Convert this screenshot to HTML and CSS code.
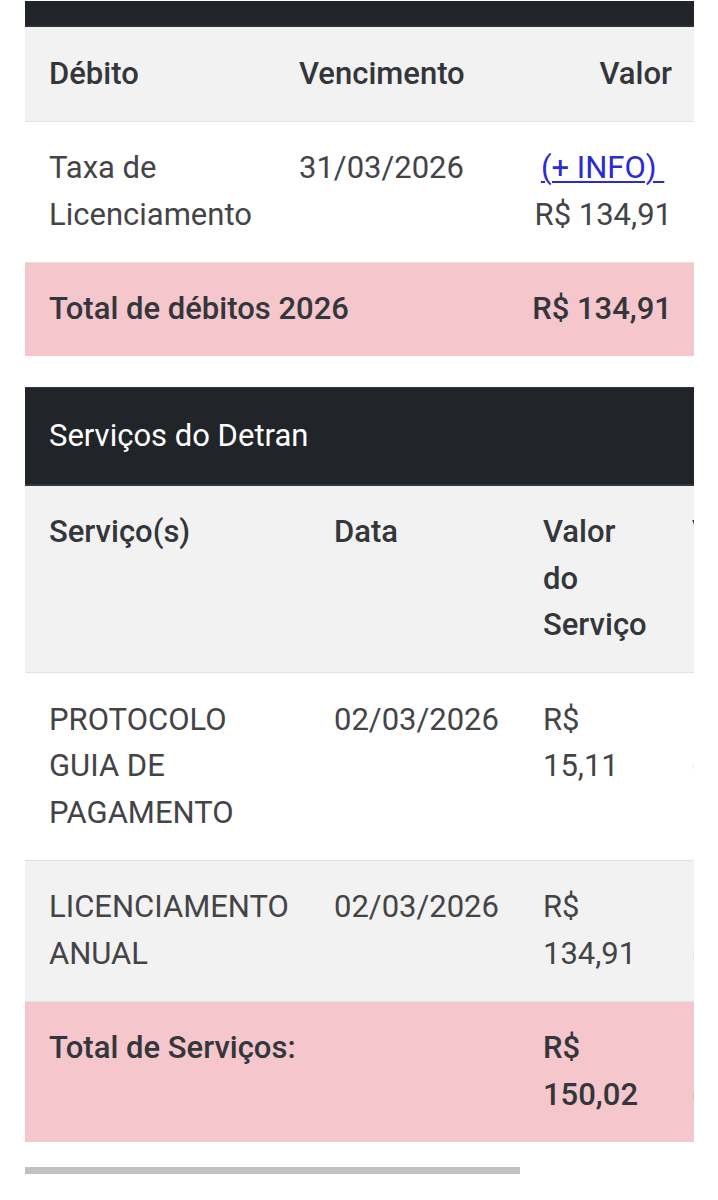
FILE: index.html
```html
<!DOCTYPE html>
<html lang="pt-BR">
<head>
<meta charset="utf-8">
<title>Débitos do veículo</title>
<link rel="stylesheet" href="styles.css">
</head>
<body>
<div class="page">
  <div class="scroller">
    <table class="tbl tbl-debitos">
      <colgroup><col class="d1"><col class="d2"><col class="d3"></colgroup>
      <thead>
        <tr><th class="dark clipped" colspan="3"></th></tr>
      </thead>
      <tbody>
        <tr class="odd head">
          <td>Débito</td>
          <td>Vencimento</td>
          <td class="right">Valor</td>
        </tr>
        <tr>
          <td>Taxa de Licenciamento</td>
          <td>31/03/2026</td>
          <td class="right"><a href="#" class="info">(+ INFO)&nbsp;</a>&nbsp;<br>R$ 134,91</td>
        </tr>
        <tr class="total">
          <td colspan="2">Total de débitos 2026</td>
          <td class="right">R$ 134,91</td>
        </tr>
      </tbody>
    </table>

    <table class="tbl tbl-servicos">
      <colgroup><col class="s1"><col class="s2"><col class="s3"><col class="s4"></colgroup>
      <thead>
        <tr><th class="dark" colspan="4">Serviços do Detran</th></tr>
      </thead>
      <tbody>
        <tr class="odd head">
          <td>Serviço(s)</td>
          <td>Data</td>
          <td>Valor do Serviço</td>
          <td>Valor Pago</td>
        </tr>
        <tr>
          <td>PROTOCOLO GUIA DE PAGAMENTO</td>
          <td>02/03/2026</td>
          <td>R$ 15,11</td>
          <td><span class="indent">R$ 0,00</span><br>(em aberto)</td>
        </tr>
        <tr class="odd">
          <td>LICENCIAMENTO ANUAL</td>
          <td>02/03/2026</td>
          <td>R$ 134,91</td>
          <td><span class="indent">R$ 0,00</span><br>(em aberto)</td>
        </tr>
        <tr class="total">
          <td colspan="2">Total de Serviços:</td>
          <td>R$ 150,02</td>
          <td><span class="indent">R$ 0,00</span><br>(em aberto)</td>
        </tr>
      </tbody>
    </table>
  </div>
  <div class="scrollbar"><div class="thumb"></div></div>
</div>
</body>
</html>
```

FILE: styles.css
```css
html, body {
  margin: 0;
  padding: 0;
  background: #ffffff;
}

body {
  font-family: Roboto, "Noto Sans", "Liberation Sans", sans-serif;
  font-size: 31px;
  line-height: 46.5px;
  color: #444448;
}

.page {
  padding: 1px 24px 40px 25px;
}

.scroller {
  width: 669px;
  overflow: hidden;
}

.tbl {
  border-collapse: collapse;
  table-layout: fixed;
}

.tbl-debitos { width: 669px; margin-bottom: 31px; }
.tbl-servicos { width: 904px; }

.d1 { width: 250px; }
.d2 { width: 211px; }
.d3 { width: 208px; }

.s1 { width: 285px; }
.s2 { width: 209px; }
.s3 { width: 149px; }
.s4 { width: 261px; }

.tbl td,
.tbl th {
  padding: 23.5px 24px;
  text-align: left;
  vertical-align: top;
  border-top: 1px solid #dee2e6;
}

.tbl th.dark {
  background: #212529;
  color: #ffffff;
  font-weight: 400;
  border-top: 1px solid #32383e;
  border-bottom: 2px solid #32383e;
  padding-top: 24.5px;
  padding-bottom: 24.5px;
}

.tbl th.clipped {
  padding: 0;
  height: 24px;
  border-top: 0;
  border-bottom: 2px solid #2c3136;
}

.odd td { background: #f2f2f2; }

.head td {
  font-weight: 500;
  color: #33363a;
}

.total td {
  background: #f5c6cb;
  font-weight: 500;
  color: #33363a;
}

.tbl td.right {
  text-align: right;
  padding-right: 22px;
}

.info {
  color: #2a2ad6;
  text-decoration: underline;
  text-decoration-thickness: 2px;
  text-underline-offset: 3px;
}

.indent { padding-left: 40px; }

.scrollbar {
  width: 669px;
  height: 7px;
  margin-top: 25px;
}

.thumb {
  width: 495px;
  height: 7px;
  background: #c1c1c1;
}
```
